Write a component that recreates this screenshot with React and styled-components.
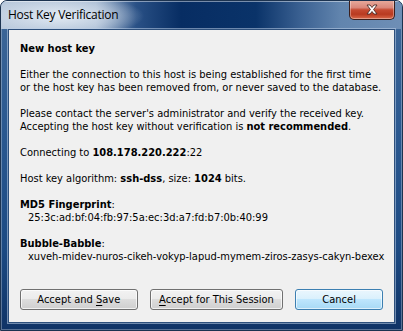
import React from 'react';
import styled, { createGlobalStyle } from 'styled-components';

const GlobalStyle = createGlobalStyle`
  html, body {
    margin: 0;
    padding: 0;
    background: #ffffff;
  }
`;

const Window = styled.div`
  width: 403px;
  height: 331px;
  box-sizing: border-box;
  border: 1px solid #1c3350;
  border-radius: 7px 7px 0 0;
  padding: 0 7px 7px;
  display: flex;
  flex-direction: column;
  background: linear-gradient(180deg, #3f6898 0, #2a5890 40%, #1c4a83 75%, #0f3366 100%);
  box-shadow: inset 0 0 0 1px rgba(255, 255, 255, 0.3);
  overflow: hidden;
`;

const TitleBar = styled.div`
  height: 28px;
  margin: 0 -7px;
  padding: 0 7px;
  display: flex;
  align-items: flex-start;
  justify-content: space-between;
  background:
    radial-gradient(ellipse 85px 22px at 58px 15px, rgba(230, 237, 245, 0.95) 0, rgba(214, 224, 236, 0.55) 60%, rgba(214, 224, 236, 0) 100%),
    linear-gradient(90deg, #b4c5d9 0, #9fb4ce 95px, #2a5186 135px, #072d63 180px, #0a3369 255px, #3b6192 300px, #6285ae 340px, #6f8fb6 403px);
  box-shadow: inset 0 1px 0 rgba(255, 255, 255, 0.45);
`;

const Title = styled.div`
  font-family: 'Open Sans', 'Noto Sans', sans-serif;
  font-size: 12px;
  line-height: 28px;
  color: #000000;
  letter-spacing: -0.25px;
`;

const CloseButton = styled.div`
  width: 46px;
  height: 20px;
  margin-top: -1px;
  box-sizing: border-box;
  border: 1px solid #3b1f1c;
  border-top: none;
  border-radius: 0 0 5px 5px;
  background: linear-gradient(180deg, #e8ad9f 0, #d9877a 40%, #c54a31 52%, #b93a20 75%, #d9694a 100%);
  box-shadow: inset 0 0 0 1px rgba(255, 255, 255, 0.35);
  display: flex;
  align-items: center;
  justify-content: center;
`;

const Client = styled.div`
  flex: 1;
  box-sizing: border-box;
  border: 1px solid #2d4f7b;
  box-shadow: 0 0 0 1px rgba(190, 208, 232, 0.55);
  background: #f0f0f0;
  padding: 12px 11px 12px;
  display: flex;
  flex-direction: column;
  font-family: 'DejaVu Sans Condensed', 'DejaVu Sans', sans-serif;
  font-size: 11px;
  line-height: 13px;
  color: #000000;
`;

const Section = styled.div`
  margin-bottom: 13px;
  white-space: nowrap;
`;

const Line = styled.div`
  padding-left: ${(p) => (p.$indent ? '8px' : '0')};
  white-space: nowrap;
`;

const ButtonRow = styled.div`
  margin-top: auto;
  display: flex;
  gap: 12px;
`;

const Button = styled.button`
  width: ${(p) => p.$width}px;
  height: 21px;
  box-sizing: border-box;
  padding: 0;
  font-family: 'DejaVu Sans Condensed', 'DejaVu Sans', sans-serif;
  font-size: 11px;
  color: #000000;
  border-radius: 3px;
  border: 1px solid ${(p) => (p.$default ? '#3c7fb1' : '#707070')};
  background: ${(p) =>
    p.$default
      ? 'linear-gradient(180deg, #eaf6fd 0, #d9f0fc 50%, #bee6fd 50%, #a7d9f5 100%)'
      : 'linear-gradient(180deg, #f2f2f2 0, #ebebeb 50%, #dddddd 50%, #cfcfcf 100%)'};
  box-shadow: inset 0 0 0 1px ${(p) => (p.$default ? 'rgba(255,255,255,0.6)' : 'rgba(255,255,255,0.7)')};

  u {
    text-decoration: underline;
    text-underline-offset: 2px;
  }
`;

function CloseGlyph() {
  return (
    <svg width="14" height="11" viewBox="0 0 14 11">
      <path
        d="M2 1 L5 1 L7 3.5 L9 1 L12 1 L8.6 5.5 L12 10 L9 10 L7 7.5 L5 10 L2 10 L5.4 5.5 Z"
        fill="#ffffff"
        stroke="#4a2a26"
        strokeWidth="0.9"
        strokeLinejoin="round"
      />
    </svg>
  );
}

export default function App() {
  return (
    <>
      <GlobalStyle />
      <Window>
        <TitleBar>
          <Title>Host Key Verification</Title>
          <CloseButton>
            <CloseGlyph />
          </CloseButton>
        </TitleBar>
        <Client>
          <Section>
            <b>New host key</b>
          </Section>
          <Section>
            <Line>Either the connection to this host is being established for the first time</Line>
            <Line>or the host key has been removed from, or never saved to the database.</Line>
          </Section>
          <Section>
            <Line>Please contact the server's administrator and verify the received key.</Line>
            <Line>
              Accepting the host key without verification is <b>not recommended</b>.
            </Line>
          </Section>
          <Section>
            Connecting to <b>108.178.220.222</b>:22
          </Section>
          <Section>
            Host key algorithm: <b>ssh-dss</b>, size: <b>1024</b> bits.
          </Section>
          <Section>
            <Line>
              <b>MD5 Fingerprint</b>:
            </Line>
            <Line $indent>25:3c:ad:bf:04:fb:97:5a:ec:3d:a7:fd:b7:0b:40:99</Line>
          </Section>
          <Section>
            <Line>
              <b>Bubble-Babble</b>:
            </Line>
            <Line $indent>xuveh-midev-nuros-cikeh-vokyp-lapud-mymem-ziros-zasys-cakyn-bexex</Line>
          </Section>
          <ButtonRow>
            <Button $width={118}>
              Accept and <u>S</u>ave
            </Button>
            <Button $width={134}>
              <u>A</u>ccept for This Session
            </Button>
            <Button $width={88} $default>
              Cancel
            </Button>
          </ButtonRow>
        </Client>
      </Window>
    </>
  );
}
